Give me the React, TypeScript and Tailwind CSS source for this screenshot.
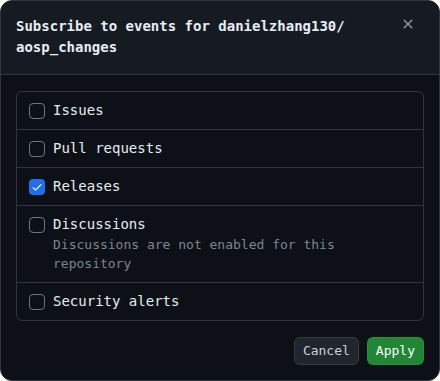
import React from "react";

interface EventOption {
  label: string;
  checked?: boolean;
  note?: string;
}

const options: EventOption[] = [
  { label: "Issues" },
  { label: "Pull requests" },
  { label: "Releases", checked: true },
  { label: "Discussions", note: "Discussions are not enabled for this repository" },
  { label: "Security alerts" },
];

const CheckBox = ({ checked }: { checked?: boolean }) => {
  if (checked) {
    return (
      <span className="flex items-center justify-center w-4 h-4 mt-[2.5px] rounded-[4px] bg-[#1f6feb] shrink-0">
        <svg width="12" height="12" viewBox="0 0 16 16" fill="#ffffff">
          <path d="M13.78 4.22a.75.75 0 0 1 0 1.06l-7.25 7.25a.75.75 0 0 1-1.06 0L2.22 9.28a.751.751 0 0 1 .018-1.042.751.751 0 0 1 1.042-.018L6 10.94l6.72-6.72a.75.75 0 0 1 1.06 0Z" />
        </svg>
      </span>
    );
  }
  return <span className="block w-4 h-4 mt-[2.5px] rounded-[4px] border border-[#6e7681] shrink-0" />;
};

const App = () => {
  return (
    <div
      className="w-[440px] h-[381px] flex flex-col bg-[#0d1117] border border-[#30363d] rounded-xl overflow-hidden text-[#e6edf3]"
      style={{ fontFamily: '"DejaVu Sans Mono", monospace' }}
    >
      <div className="flex items-start gap-2 bg-[#161b22] border-b border-[#30363d] pl-[15px] pr-[23px] pt-[15px] pb-4">
        <h1 className="flex-1 text-[14px] leading-[21px] font-bold text-[#e6edf3]">
          Subscribe to events for danielzhang130/
          <br />
          aosp_changes
        </h1>
        <button className="w-4 h-4 text-[#8b949e]" aria-label="Close">
          <svg width="16" height="16" viewBox="0 0 16 16" fill="currentColor">
            <path d="M3.72 3.72a.75.75 0 0 1 1.06 0L8 6.94l3.22-3.22a.749.749 0 0 1 1.275.326.749.749 0 0 1-.215.734L9.06 8l3.22 3.22a.749.749 0 0 1-.326 1.275.749.749 0 0 1-.734-.215L8 9.06l-3.22 3.22a.751.751 0 0 1-1.042-.018.751.751 0 0 1-.018-1.042L6.94 8 3.72 4.78a.75.75 0 0 1 0-1.06Z" />
          </svg>
        </button>
      </div>

      <div className="px-[15px] pt-4">
        <div className="border border-[#30363d] rounded-md divide-y divide-[#30363d]">
          {options.map((opt) => (
            <label key={opt.label} className={`flex items-start gap-2 px-3 pt-2 ${opt.note ? "pb-[9px]" : "pb-2"}`}>
              <CheckBox checked={opt.checked} />
              <div className="min-w-0">
                <div className="text-[14px] leading-[21px] text-[#e6edf3]">{opt.label}</div>
                {opt.note && (
                  <div className="text-[13px] leading-[19px] text-[#7d8590]">{opt.note}</div>
                )}
              </div>
            </label>
          ))}
        </div>
      </div>

      <div className="flex justify-end gap-2 px-[15px] pt-4 pb-[15px]">
        <button className="h-7 px-2 rounded-md border border-[#363b42] bg-[#21262d] text-[13px] text-[#c9d1d9]">
          Cancel
        </button>
        <button className="h-7 px-2 rounded-md border border-[#2ea04366] bg-[#238636] text-[13px] text-white">
          Apply
        </button>
      </div>
    </div>
  );
};

export default App;
